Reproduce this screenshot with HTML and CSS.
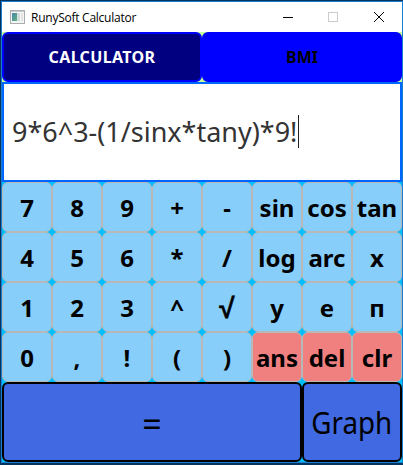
FILE: index.html
```html
<!DOCTYPE html>
<html lang="en">
<head>
<meta charset="utf-8">
<title>RunySoft Calculator</title>
<link rel="stylesheet" href="styles.css">
</head>
<body>
<div class="window">
  <header class="titlebar">
    <svg class="app-icon" width="15" height="14" viewBox="0 0 15 14">
      <defs><linearGradient id="pic" x1="0" y1="0" x2="1" y2="1"><stop offset="0" stop-color="#4888ac"/><stop offset="1" stop-color="#60b080"/></linearGradient></defs>
      <rect x=".5" y=".5" width="14" height="13" fill="#f4f4f4" stroke="#a9adb0"/>
      <path d="M1 1.5h13" stroke="#c8cccf"/>
      <rect x="2" y="3" width="5" height="8" fill="url(#pic)"/>
      <rect x="7" y="3" width="3" height="8" fill="#d2dcda"/>
      <rect x="11" y="3" width="2" height="8" fill="#e2e4e4"/>
    </svg>
    <span class="title">RunySoft Calculator</span>
    <svg class="controls" width="102" height="12" viewBox="0 0 102 12" fill="none">
      <path d="M0 6.5h10" stroke="#000"/>
      <rect x="45.500" y="1.500" width="9" height="9" stroke="#ccc"/>
      <path d="M91 1l10 10M101 1L91 11" stroke="#000"/>
    </svg>
  </header>
  <nav class="tabs">
    <button class="tab active"><span>CALCULATOR</span></button>
    <button class="tab"><span>BMI</span></button>
  </nav>
  <div class="display"><span class="expression">9*6^3-(1/sinx*tany)*9!</span><span class="caret"></span></div>
  <main class="keys">
    <button>7</button><button>8</button><button>9</button><button>+</button><button>-</button><button>sin</button><button>cos</button><button>tan</button>
    <button>4</button><button>5</button><button>6</button><button>*</button><button>/</button><button>log</button><button>arc</button><button>x</button>
    <button>1</button><button>2</button><button>3</button><button>^</button><button class="root">√</button><button>y</button><button>e</button><button>п</button>
    <button>0</button><button>,</button><button>!</button><button>(</button><button>)</button><button class="edit">ans</button><button class="edit">del</button><button class="edit">clr</button>
  </main>
  <footer class="actions">
    <button class="equals">=</button>
    <button class="graph"><span>Graph</span></button>
  </footer>
</div>
</body>
</html>
```
FILE: styles.css
```css
* { box-sizing: border-box; }
body {
  margin: 0;
  padding: 1px 0 2px 1px;
  height: 465px;
  overflow: hidden;
  background: #07345f;
  font-family: "Noto Sans", sans-serif;
}
button {
  margin: 0;
  padding: 0;
  font-family: inherit;
  color: #000;
  display: flex;
  align-items: center;
  justify-content: center;
}
.window {
  width: 402px;
  height: 462px;
  border: 1px solid #187ed0;
  background: #00bfff;
}
.titlebar {
  height: 30px;
  background: #fff;
  display: flex;
  align-items: center;
  padding-left: 8px;
}
.title {
  margin-left: 6px;
  font: 12px "Open Sans", sans-serif;
  letter-spacing: -0.25px;
  flex: 1;
  white-space: nowrap;
}
.controls { margin-right: 17px; flex: none; }
.app-icon { flex: none; }
.tabs {
  display: flex;
  height: 50px;
  background: #c8ff9a;
}
.tab {
  flex: 1;
  border: 2px solid #00f;
  border-radius: 6px;
  background: #00f;
  font-size: 16px;
  font-weight: 700;
}
.tab.active { background: #000080; color: #fff; letter-spacing: 0.35px; }
.display {
  height: 100px;
  border: 2px solid #06f;
  background: #fff;
  display: flex;
  align-items: center;
  padding: 0 0 2px 8px;
}
.expression {
  width: 286px;
  font-size: 28px;
  line-height: 38px;
  color: #333;
  white-space: nowrap;
  transform: scaleX(0.963);
  transform-origin: left;
}
.caret { width: 1px; height: 33px; background: #222; }
.keys {
  display: grid;
  grid-template-columns: repeat(8, 50px);
  grid-auto-rows: 50px;
}
.keys button {
  border: 1px solid #b8b8b8;
  border-radius: 6px;
  background: #87cefa;
  font-size: 24px;
  font-weight: 700;
}
.keys .root { font-size: 28px; line-height: 1; -webkit-text-stroke: 0.5px #000; }
.keys .edit { background: #f08080; }
.actions { display: flex; height: 80px; }
.actions button {
  border: 2px solid #000;
  border-radius: 6px;
  background: #4169e1;
  font-size: 30px;
}
.actions .equals { width: 300px; padding-top: 4px; font-size: 34px; }
.graph { width: 100px; }
.graph span { transform: scaleX(0.925); }
```
